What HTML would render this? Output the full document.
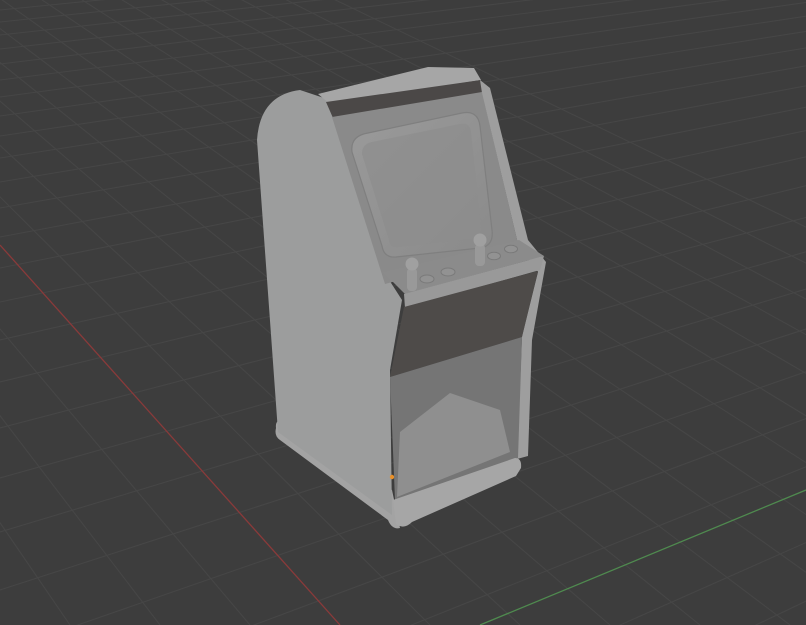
<!DOCTYPE html>
<html><head><meta charset="utf-8"><style>
html,body{margin:0;padding:0;background:#3d3d3d;overflow:hidden;width:806px;height:625px}
svg{display:block}
</style></head><body>
<svg width="806" height="625" viewBox="0 0 806 625" xmlns="http://www.w3.org/2000/svg">
<rect width="806" height="625" fill="#3d3d3d"/>
<defs><clipPath id="c"><rect width="806" height="625"/></clipPath>
<linearGradient id="sg" x1="0" y1="0" x2="1" y2="1"><stop offset="0" stop-color="#9a9a9a"/><stop offset="1" stop-color="#8a8a8a"/></linearGradient></defs>
<g clip-path="url(#c)" stroke="#464646" stroke-width="1.1" fill="none">
<g>
<line x1="0" y1="10" x2="2591" y2="-249"/><line x1="0" y1="22" x2="2591" y2="-249"/>
<line x1="0" y1="35" x2="2591" y2="-249"/><line x1="0" y1="49" x2="2591" y2="-249"/>
<line x1="0" y1="64" x2="2591" y2="-249"/><line x1="0" y1="80" x2="2591" y2="-249"/>
<line x1="0" y1="97" x2="2591" y2="-249"/><line x1="0" y1="116" x2="2591" y2="-249"/>
<line x1="0" y1="136" x2="2591" y2="-249"/><line x1="0" y1="158" x2="2591" y2="-249"/>
<line x1="0" y1="182" x2="2591" y2="-249"/><line x1="0" y1="208" x2="2591" y2="-249"/>
<line x1="0" y1="237" x2="2591" y2="-249"/><line x1="0" y1="268" x2="2591" y2="-249"/>
<line x1="0" y1="302" x2="2591" y2="-249"/><line x1="0" y1="340" x2="2591" y2="-249"/>
<line x1="0" y1="382" x2="2591" y2="-249"/><line x1="0" y1="428" x2="2591" y2="-249"/>
<line x1="0" y1="478" x2="2591" y2="-249"/><line x1="0" y1="532" x2="2591" y2="-249"/>
<line x1="0" y1="590" x2="2591" y2="-249"/><line x1="0" y1="652" x2="2591" y2="-249"/>
<line x1="0" y1="720" x2="2591" y2="-249"/><line x1="0" y1="790" x2="2591" y2="-249"/>
<line x1="0" y1="900" x2="2591" y2="-249"/><line x1="0" y1="985" x2="2591" y2="-249"/>
<line x1="0" y1="1075" x2="2591" y2="-249"/>
</g>
<g>
<line x1="-700" y1="-500" x2="-560" y2="625"/><line x1="-700" y1="-500" x2="-470" y2="625"/>
<line x1="-700" y1="-500" x2="-380" y2="625"/><line x1="-700" y1="-500" x2="-290" y2="625"/>
<line x1="-700" y1="-500" x2="-200" y2="625"/><line x1="-700" y1="-500" x2="-110" y2="625"/>
<line x1="-700" y1="-500" x2="-20" y2="625"/><line x1="-700" y1="-500" x2="70" y2="625"/>
<line x1="-700" y1="-500" x2="160" y2="625"/><line x1="-700" y1="-500" x2="250" y2="625"/>
<line x1="-700" y1="-500" x2="430" y2="625"/><line x1="-700" y1="-500" x2="520" y2="625"/>
<line x1="-700" y1="-500" x2="610" y2="625"/><line x1="-700" y1="-500" x2="700" y2="625"/>
<line x1="-700" y1="-500" x2="790" y2="625"/><line x1="-700" y1="-500" x2="880" y2="625"/>
<line x1="-700" y1="-500" x2="970" y2="625"/><line x1="-700" y1="-500" x2="1060" y2="625"/>
<line x1="-700" y1="-500" x2="1150" y2="625"/><line x1="-700" y1="-500" x2="1240" y2="625"/>
<line x1="-700" y1="-500" x2="1330" y2="625"/><line x1="-700" y1="-500" x2="1420" y2="625"/>
<line x1="-700" y1="-500" x2="1520" y2="625"/><line x1="-700" y1="-500" x2="1630" y2="625"/>
</g>
<line x1="0" y1="245" x2="340" y2="625" stroke="#8a3a3a" stroke-width="1.3"/>
<line x1="480" y1="625" x2="806" y2="490" stroke="#4f8a4f" stroke-width="1.3"/>
</g>

<path d="M276,428 Q275,420 282,420 L392,490 L400,528 Q392,530 388,520 L280,440 Q274,436 276,428Z" fill="#a3a3a3"/>
<path d="M257,140 Q260,95 300,90 L330,100 L384,272 L402,300 L390,370 L392,515 L278,432 Z" fill="#9c9d9d"/>
<path d="M318,94 L428,67 L474,68 L481,80 L330,104 Z" fill="#a6a6a6"/>
<path d="M326,102 L481,80 L482,93 L333,118 Z" fill="#4b4847"/>
<path d="M332,117 L482,92 L519,248 L385,284 Z" fill="#8a8a8a"/>
<path d="M480,80 L490,88 L528,240 L546,262 L532,340 L528,456 L517,459 L522,336 L538,272 L519,248 L482,93 Z" fill="#9e9e9e"/>
<!-- screen -->
<path d="M352,152 Q350,136 368,133 L462,113 Q478,110 480,126 L492,230 Q494,246 480,248 L396,257 Q384,258 382,246 Z" fill="url(#sg)" stroke="#7f7f7f" stroke-width="1.2"/>
<path d="M362,154 Q362,144 372,142 L460,124 Q470,122 471,132 L481,228 Q482,238 472,239 L398,247 Q390,248 389,240 Z" fill="#8d8d8d" opacity="0.7"/>
<path d="M383,272 L519,240 L544,256 L405,294 Z" fill="#8b8b8b"/>
<path d="M404,294 L544,256 L540,270 L405,308 Z" fill="#999999"/>
<path d="M404,307 L538,271 L522,337 L390,377 Z" fill="#4e4b49"/>
<path d="M390,377 L522,337 L518,458 L395,500 Z" fill="#757575"/>
<path d="M450,393 L500,410 L510,452 L397,497 L400,432 Z" fill="#8f8f8f"/>
<path d="M393,500 L515,458 Q522,458 521,468 L516,476 L412,522 Q404,530 396,524 Z" fill="#a6a6a6"/>
<rect x="407" y="268" width="10" height="23" rx="4" fill="#999"/>
<circle cx="412" cy="264" r="6.5" fill="#a0a0a0"/>
<rect x="475" y="244" width="10" height="22" rx="4" fill="#999"/>
<circle cx="480" cy="240" r="6.5" fill="#a0a0a0"/>
<g fill="#929292" stroke="#7a7a7a" stroke-width="1">
<ellipse cx="427" cy="279" rx="7" ry="4"/>
<ellipse cx="448" cy="272" rx="7" ry="4"/>
<ellipse cx="494" cy="256" rx="6.5" ry="3.8"/>
<ellipse cx="511" cy="249" rx="6.5" ry="3.8"/>
</g>
<circle cx="392" cy="477" r="2.2" fill="#e8902a"/>
</svg>
</body></html>
